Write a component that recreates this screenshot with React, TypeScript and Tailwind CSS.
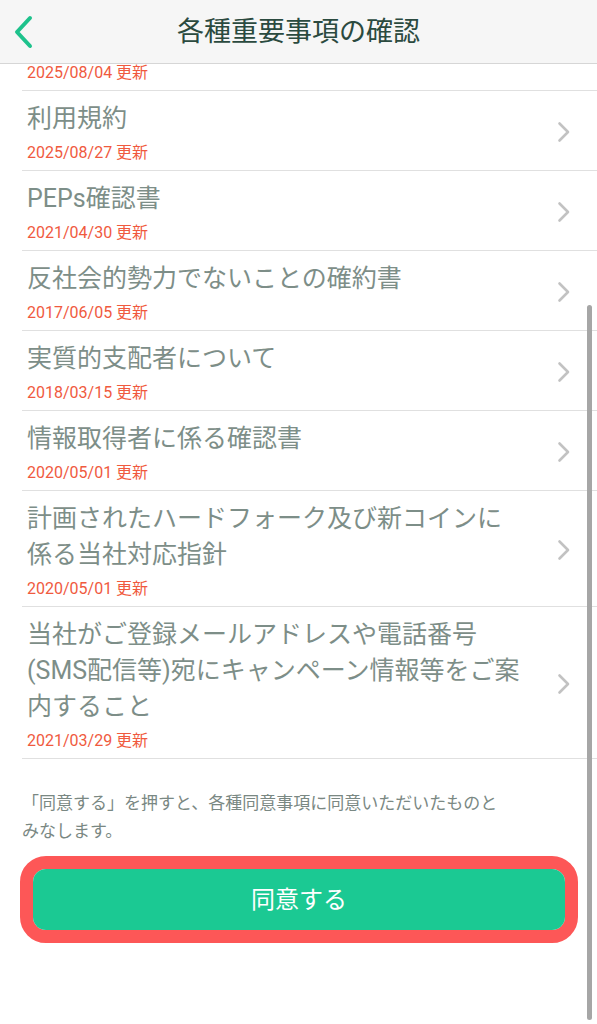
const items = [
  { title: "利用規約", date: "2025/08/27" },
  { title: "PEPs確認書", date: "2021/04/30" },
  { title: "反社会的勢力でないことの確約書", date: "2017/06/05" },
  { title: "実質的支配者について", date: "2018/03/15" },
  { title: "情報取得者に係る確認書", date: "2020/05/01" },
  { title: "計画されたハードフォーク及び新コインに係る当社対応指針", date: "2020/05/01" },
  {
    title: "当社がご登録メールアドレスや電話番号(SMS配信等)宛にキャンペーン情報等をご案内すること",
    date: "2021/03/29",
  },
];

const Chevron = () => (
  <svg width="14" height="22" viewBox="0 0 14 22" fill="none">
    <path d="M2.5 2.5 L11 11 L2.5 19.5" stroke="#c2c2c2" strokeWidth="2.6" strokeLinecap="round" strokeLinejoin="round" />
  </svg>
);

const App = () => {
  return (
    <div className="relative min-h-screen w-full bg-white font-['Roboto','Noto_Sans_CJK_JP',sans-serif]">
      <div className="flex h-[64px] items-center border-b border-[#d6d6d6] bg-[#f6f6f6]">
        <div className="flex w-[60px] items-center pl-[13px]">
          <svg width="22" height="34" viewBox="0 0 22 34" fill="none">
            <path d="M17 3 L4 17 L17 31" stroke="#1ec28c" strokeWidth="4" strokeLinecap="round" strokeLinejoin="round" />
          </svg>
        </div>
        <h1 className="flex-1 text-center text-[27px] leading-[34px] text-[#2b4a3f]">各種重要事項の確認</h1>
        <div className="w-[60px]" />
      </div>

      <div className="ml-[22px] flex h-[27px] flex-col justify-end overflow-hidden border-b border-[#e0e0e0] pb-[8px] pl-[5px]">
        <p className="text-[16px] leading-[18px] text-[#f05a3e]">2025/08/04 更新</p>
      </div>

      {items.map((item) => (
        <div
          key={item.title}
          className="ml-[22px] flex items-center border-b border-[#e0e0e0] pb-[7px] pl-[5px] pr-[26px] pt-[10px]"
        >
          <div className="flex-1">
            <p className="w-[498px] text-[25px] leading-[36px] text-[#7d8e88]">{item.title}</p>
            <p className="mt-[6px] text-[16px] leading-[20px] text-[#f05a3e]">{item.date} 更新</p>
          </div>
          <Chevron />
        </div>
      ))}

      <p className="ml-[22px] mt-[30px] max-w-[482px] text-[17px] leading-[28px] text-[#7a8883]">
        「同意する」を押すと、各種同意事項に同意いただいたものとみなします。
      </p>

      <div className="ml-[20px] mt-[11px] w-[558px] rounded-[26px] border-[13px] border-[#fd5757]">
        <button className="flex h-[61px] w-full items-center justify-center rounded-[13px] bg-[#1bc993] text-[24px] text-white">
          同意する
        </button>
      </div>

      <div className="absolute left-[587px] top-[305px] h-[715px] w-[5px] rounded-full bg-[#a6a6a6]" />
    </div>
  );
};

export default App;
